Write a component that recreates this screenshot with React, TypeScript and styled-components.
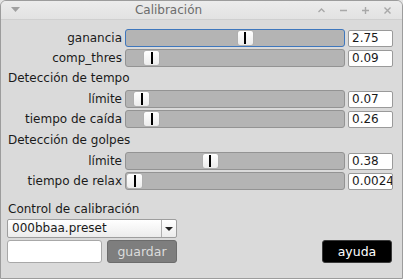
import React from 'react'
import styled, { createGlobalStyle } from 'styled-components'

const GlobalStyle = createGlobalStyle`
  html, body {
    margin: 0;
    padding: 0;
    background: #e4e4e4;
  }
  * {
    box-sizing: border-box;
  }
`

const Window = styled.div`
  width: 403px;
  height: 279px;
  display: flex;
  flex-direction: column;
  border: 1px solid #9c9c9c;
  border-radius: 6px 6px 0 0;
  background: #dadada;
  overflow: hidden;
  font-family: 'DejaVu Sans', 'Liberation Sans', sans-serif;
  font-size: 12px;
  color: #1a1a1a;
`

const TitleBar = styled.div`
  height: 19px;
  display: flex;
  align-items: center;
  background: linear-gradient(#ececec, #e2e2e2);
  border-bottom: 1px solid #cfcfcf;
  padding: 0 10px 0 10px;
`

const TitleText = styled.div`
  flex: 1;
  text-align: center;
  color: #6c6c6c;
  padding-left: 0;
`

const TitleButtons = styled.div`
  display: flex;
  gap: 13px;
  align-items: center;
`

const Content = styled.div`
  flex: 1;
  display: flex;
  flex-direction: column;
  padding: 9px 10px 0 6px;
`

const SliderGrid = styled.div`
  display: grid;
  grid-template-columns: 115px 220px 45px;
  column-gap: 3px;
  row-gap: 2px;
  align-items: center;
`

const Label = styled.div`
  text-align: right;
  white-space: nowrap;
`

const Track = styled.div<{ $focused?: boolean }>`
  position: relative;
  height: 18px;
  background: #b4b4b4;
  border: 1px solid ${({ $focused }) => ($focused ? '#3f77bd' : '#939393')};
  border-radius: 3px;
`

const Handle = styled.div`
  position: absolute;
  top: 0;
  width: 17px;
  height: 16px;
  background: linear-gradient(#ffffff, #ececec);
  border: 1px solid #b0b0b0;
  border-radius: 3px;
  display: flex;
  align-items: center;
  justify-content: center;
  &::after {
    content: '';
    width: 2px;
    height: 12px;
    background: #000;
  }
`

const ValueBox = styled.div`
  height: 17px;
  background: #fff;
  border: 1px solid #9a9a9a;
  border-radius: 2px;
  padding: 0 0 0 3px;
  line-height: 15px;
  overflow: hidden;
  white-space: nowrap;
`

const SectionTitle = styled.div<{ $gap?: number }>`
  grid-column: 1 / -1;
  height: 19px;
  line-height: 19px;
  padding-left: 1px;
  margin-top: ${({ $gap }) => $gap ?? 0}px;
`

const Calib = styled.div`
  display: flex;
  flex-direction: column;
  margin-top: 11px;
`

const CalibTitle = styled.div`
  height: 18px;
  line-height: 16px;
  padding-left: 1px;
`

const Select = styled.div`
  width: 170px;
  height: 19px;
  display: flex;
  align-items: stretch;
  background: linear-gradient(#ffffff, #ececec);
  border: 1px solid #9e9e9e;
  border-radius: 2px;
`

const SelectValue = styled.div`
  flex: 1;
  padding-left: 4px;
  line-height: 17px;
`

const SelectArrow = styled.div`
  width: 15px;
  border-left: 1px solid #b0b0b0;
  display: flex;
  align-items: center;
  justify-content: center;
  &::after {
    content: '';
    border-left: 4px solid transparent;
    border-right: 4px solid transparent;
    border-top: 4px solid #222;
  }
`

const ActionRow = styled.div`
  display: flex;
  align-items: center;
  margin-top: 2px;
  gap: 5px;
`

const TextInput = styled.div`
  width: 95px;
  height: 23px;
  background: #fff;
  border: 1px solid #a8a8a8;
  border-radius: 3px;
`

const Button = styled.div<{ $dark?: boolean }>`
  width: 70px;
  height: 23px;
  line-height: 21px;
  text-align: center;
  border-radius: 3px;
  font-size: 12.5px;
  background: ${({ $dark }) => ($dark ? '#000' : '#7e7e7e')};
  color: ${({ $dark }) => ($dark ? '#fff' : '#dcdcdc')};
  border: 1px solid ${({ $dark }) => ($dark ? '#3a3a3a' : '#6c6c6c')};
  margin-left: ${({ $dark }) => ($dark ? 'auto' : '0')};
`

type SliderRow = { label: string; pos: number; value: string; focused?: boolean }

const general: SliderRow[] = [
  { label: 'ganancia', pos: 0.55, value: '2.75', focused: true },
  { label: 'comp_thres', pos: 0.085, value: '0.09' },
]
const tempo: SliderRow[] = [
  { label: 'límite', pos: 0.035, value: '0.07' },
  { label: 'tiempo de caída', pos: 0.085, value: '0.26' },
]
const golpes: SliderRow[] = [
  { label: 'límite', pos: 0.378, value: '0.38' },
  { label: 'tiempo de relax', pos: 0, value: '0.0024' },
]

function Rows({ rows }: { rows: SliderRow[] }) {
  return (
    <>
      {rows.map((r) => (
        <React.Fragment key={r.label + r.value}>
          <Label>{r.label}</Label>
          <Track $focused={r.focused}>
            <Handle style={{ left: `${r.pos * 201}px` }} />
          </Track>
          <ValueBox>{r.value}</ValueBox>
        </React.Fragment>
      ))}
    </>
  )
}

function Glyph({ d }: { d: string }) {
  return (
    <svg width="9" height="9" viewBox="0 0 9 9">
      <path d={d} stroke="#a8a8a8" strokeWidth="1.4" fill="none" />
    </svg>
  )
}

export default function App() {
  return (
    <>
      <GlobalStyle />
      <Window>
        <TitleBar>
          <svg width="9" height="6" viewBox="0 0 9 6">
            <path d="M0 0 L9 0 L4.5 5 Z" fill="#a0a0a0" />
          </svg>
          <TitleText>Calibración</TitleText>
          <TitleButtons>
            <Glyph d="M1.5 6 L4.5 3 L7.5 6" />
            <Glyph d="M1 4.5 L8 4.5" />
            <Glyph d="M1 4.5 L8 4.5 M4.5 1 L4.5 8" />
            <Glyph d="M1.5 1.5 L7.5 7.5 M7.5 1.5 L1.5 7.5" />
          </TitleButtons>
        </TitleBar>
        <Content>
          <SliderGrid>
            <Rows rows={general} />
            <SectionTitle>Detección de tempo</SectionTitle>
            <Rows rows={tempo} />
            <SectionTitle $gap={1}>Detección de golpes</SectionTitle>
            <Rows rows={golpes} />
          </SliderGrid>
          <Calib>
            <CalibTitle>Control de calibración</CalibTitle>
            <Select>
              <SelectValue>000bbaa.preset</SelectValue>
              <SelectArrow />
            </Select>
            <ActionRow>
              <TextInput />
              <Button>guardar</Button>
              <Button $dark>ayuda</Button>
            </ActionRow>
          </Calib>
        </Content>
      </Window>
    </>
  )
}
